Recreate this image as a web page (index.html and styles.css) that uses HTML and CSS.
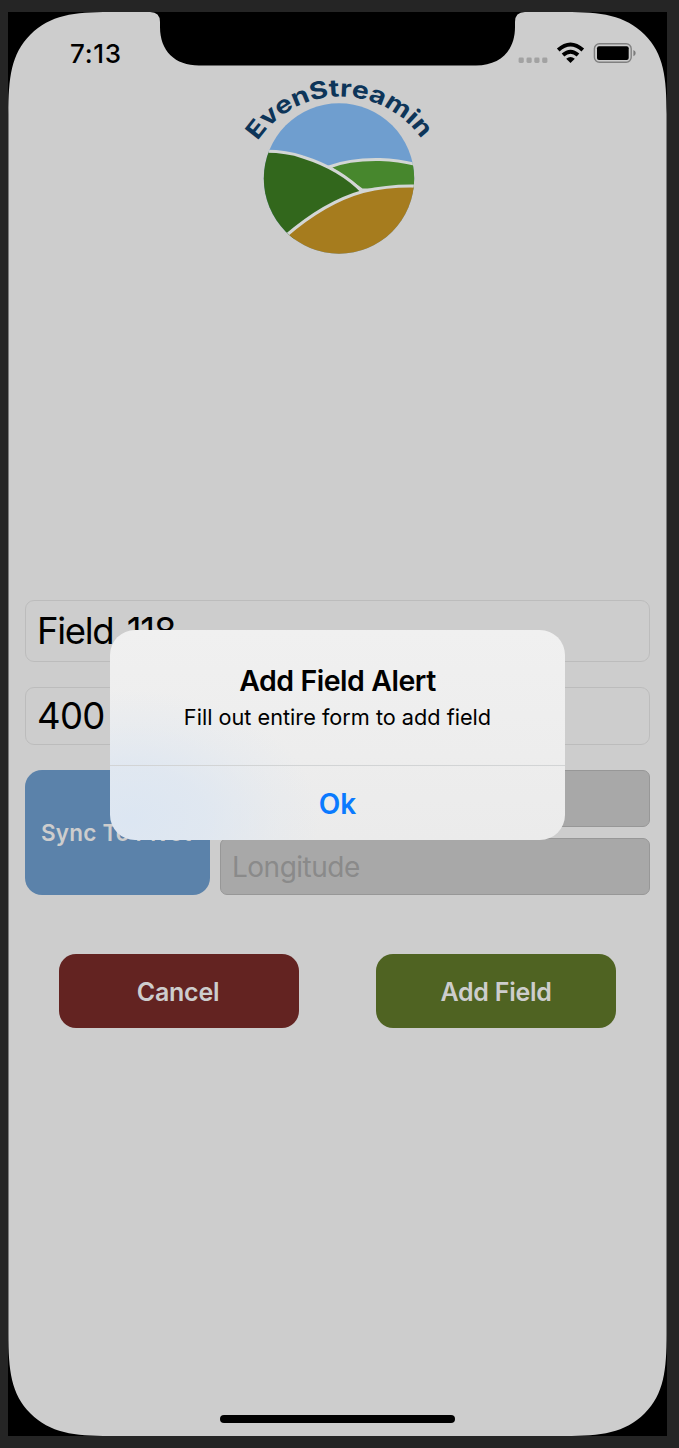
FILE: index.html
```html
<!DOCTYPE html>
<html lang="en">
<head>
<meta charset="utf-8">
<title>Add Field</title>
<link rel="stylesheet" href="styles.css">
</head>
<body>
<div class="phone">
  <main class="screen">
    <header class="status">
      <span class="time">7:13</span>
      <svg class="indicators" width="122" height="26" viewBox="516 40 122 26">
        <g fill="#a2a2a2">
          <rect x="518.6" y="57.5" width="5.2" height="5.4" rx="1.4"/>
          <rect x="526.5" y="57.5" width="5.2" height="5.4" rx="1.4"/>
          <rect x="534.3" y="57.5" width="5.2" height="5.4" rx="1.4"/>
          <rect x="542.2" y="57.5" width="5.2" height="5.4" rx="1.4"/>
        </g>
        <g fill="none" stroke="#000" stroke-width="3.9">
          <path d="M558.2 50Q570.5 38.900 582.8 50"/>
          <path d="M563 55Q570.5 48.400 578 55"/>
        </g>
        <path d="M566.2 58.8Q570.5 55 574.8 58.8L570.5 63Z"/>
        <rect x="594.4" y="43.7" width="36.8" height="18.6" rx="5" fill="none" stroke="#808080" stroke-width="1.4"/>
        <rect x="597" y="46.3" width="31.7" height="13.6" rx="2"/>
        <path d="M633.4 50v6.2q2.3-.8 2.3-3.1t-2.3-3.1z" fill="#7c7c7c"/>
      </svg>
    </header>

    <svg class="logo" width="210" height="185" viewBox="235 74 210 185" role="img" aria-label="EvenStreamin">
      <defs>
        <clipPath id="disc"><circle cx="339" cy="178.5" r="75.2"/></clipPath>
        <path id="arc" d="M257.600 141.200A99 99 0 0 1 423 141.200"/>
      </defs>
      <g clip-path="url(#disc)">
        <rect x="260" y="100" width="160" height="160" fill="#6f9ecf"/>
        <path d="M329 167Q350 159 380 159.600Q400 160.500 418 165V190H362Z" fill="#47872d" stroke="#d3d6d5" stroke-width="3"/>
        <path d="M260 151.500Q284 150.500 303 157Q341 169 363.500 193L290 245H255Z" fill="#32671c" stroke="#d3d6d5" stroke-width="3"/>
        <path d="M285 236.500Q325 202 363 191.500Q390 185 420 186.200V260H285Z" fill="#a67c1e" stroke="#d3d6d5" stroke-width="3.200"/>
      </g>
      <text class="wordmark"><textPath href="#arc" textLength="193" lengthAdjust="spacingAndGlyphs">EvenStreamin</textPath></text>
    </svg>

    <form class="form">
      <div class="input name">Field 118</div>
      <div class="input size">400</div>
      <div class="location">
        <div class="sync"><span>Sync To Pivot</span></div>
        <div class="coords">
          <div class="input coord"></div>
          <div class="input coord">Longitude</div>
        </div>
      </div>
      <div class="actions">
        <div class="btn cancel"><span>Cancel</span></div>
        <div class="btn add"><span>Add Field</span></div>
      </div>
    </form>
    <div class="home"></div>

    <section class="alert" role="alertdialog">
      <div class="alert-body">
        <h1 class="alert-title">Add Field Alert</h1>
        <p class="alert-text">Fill out entire form to add field</p>
      </div>
      <div class="alert-ok">Ok</div>
    </section>
  </main>
</div>
</body>
</html>
```

FILE: styles.css
```css
* { box-sizing: border-box; }
body {
  margin: 0;
  height: 1448px;
  padding: 12px 12px 12px 8px;
  background: #252525;
  font-family: Inter, "Liberation Sans", sans-serif;
  color: #000;
}
.phone {
  width: 659px;
  height: 1424px;
  background: #000;
}
.screen {
  position: relative;
  display: flex;
  flex-direction: column;
  height: 1424px;
  background: #cdcdcd;
  clip-path: path("M0.400 102C0.400 66 3 42 22.500 22.500C42 3 66 0 102 0H142Q152 0 152 10V15C152 39 167 53.500 191 53.500H468C492 53.500 507 39 507 15V10Q507 0 517 0H557C593 0 617 3 636.500 22.500C656 42 658.600 66 658.600 102V1322C658.600 1358 656 1382 636.500 1401.500C617 1421 593 1424 557 1424H102C66 1424 42 1421 22.500 1401.500C3 1382 0.400 1358 0.400 1322Z");
}
.status {
  display: flex;
  justify-content: space-between;
  height: 62px;
  padding: 28px 29px 0 62px;
}
.time {
  font-size: 26px;
  line-height: 28px;
  font-weight: 500;
  letter-spacing: 0.7px;
}
.logo { margin-left: 227px; flex: none; overflow: visible; }
.wordmark {
  font-weight: 700;
  font-size: 24px;
  fill: #0d3559;
}
.form {
  margin: 341px 17px 0;
}
.input {
  border: 1px solid #bcbcbc;
  border-radius: 9px;
  padding-left: 11px;
  white-space: nowrap;
}
.name { height: 62px; font-size: 36.5px; line-height: 61px; letter-spacing: -1.3px; word-spacing: 4.5px; }
.size { height: 58px; margin-top: 25px; font-size: 36.5px; line-height: 57px; letter-spacing: -0.7px; }
.location {
  display: flex;
  gap: 10px;
  height: 125px;
  margin-top: 25px;
}
.sync {
  width: 185px;
  padding-left: 16px;
  border-radius: 17px;
  background: #5b82aa;
  color: #cdcdcd;
  font-size: 22.5px;
  font-weight: 600;
  line-height: 125px;
  letter-spacing: 0.2px;
  white-space: nowrap;
}
.coords {
  flex: 1;
  display: flex;
  flex-direction: column;
  justify-content: space-between;
}
.coord {
  height: 57px;
  background: #a8a8a8;
  border-color: #979797;
  border-radius: 7px;
  color: #8a8a8a;
  font-size: 28px;
  line-height: 57px;
  letter-spacing: -0.5px;
}
.actions {
  display: flex;
  justify-content: space-between;
  margin: 59px 34px 0;
}
.btn {
  width: 240px;
  height: 74px;
  border-radius: 17px;
  color: #cdcdcd;
  font-size: 25px;
  font-weight: 600;
  line-height: 76px;
  letter-spacing: -0.25px;
  text-align: center;
}
.cancel { background: #632321; padding-right: 2px; }
.add { background: #4f6322; }
.home {
  width: 235px;
  height: 8px;
  margin: auto 0 13px 212px;
  border-radius: 4px;
  background: #000;
}
/* Modal dialog above the form */
.alert {
  position: absolute;
  left: 102px;
  top: 618px;
  width: 455px;
  height: 210px;
  border-radius: 25px;
  overflow: hidden;
  text-align: center;
  background:
    radial-gradient(ellipse 190px 130px at 20px 190px, #dce6f2 0, rgba(220, 230, 242, 0.75) 40%, rgba(220, 230, 242, 0.25) 75%, rgba(220, 230, 242, 0) 100%),
    linear-gradient(#f0f0f0, #ebebeb);
}
.alert-body {
  height: 136px;
  padding-top: 33px;
  border-bottom: 1px solid #d2d4d5;
}
.alert-title {
  margin: 0;
  font-size: 28.5px;
  font-weight: 600;
  line-height: 36px;
  letter-spacing: -0.45px;
}
.alert-text {
  margin: 3px 0 0;
  font-size: 21.7px;
  line-height: 30px;
}
.alert-ok {
  color: #0a7aff;
  font-size: 28px;
  font-weight: 600;
  line-height: 76px;
}
```
